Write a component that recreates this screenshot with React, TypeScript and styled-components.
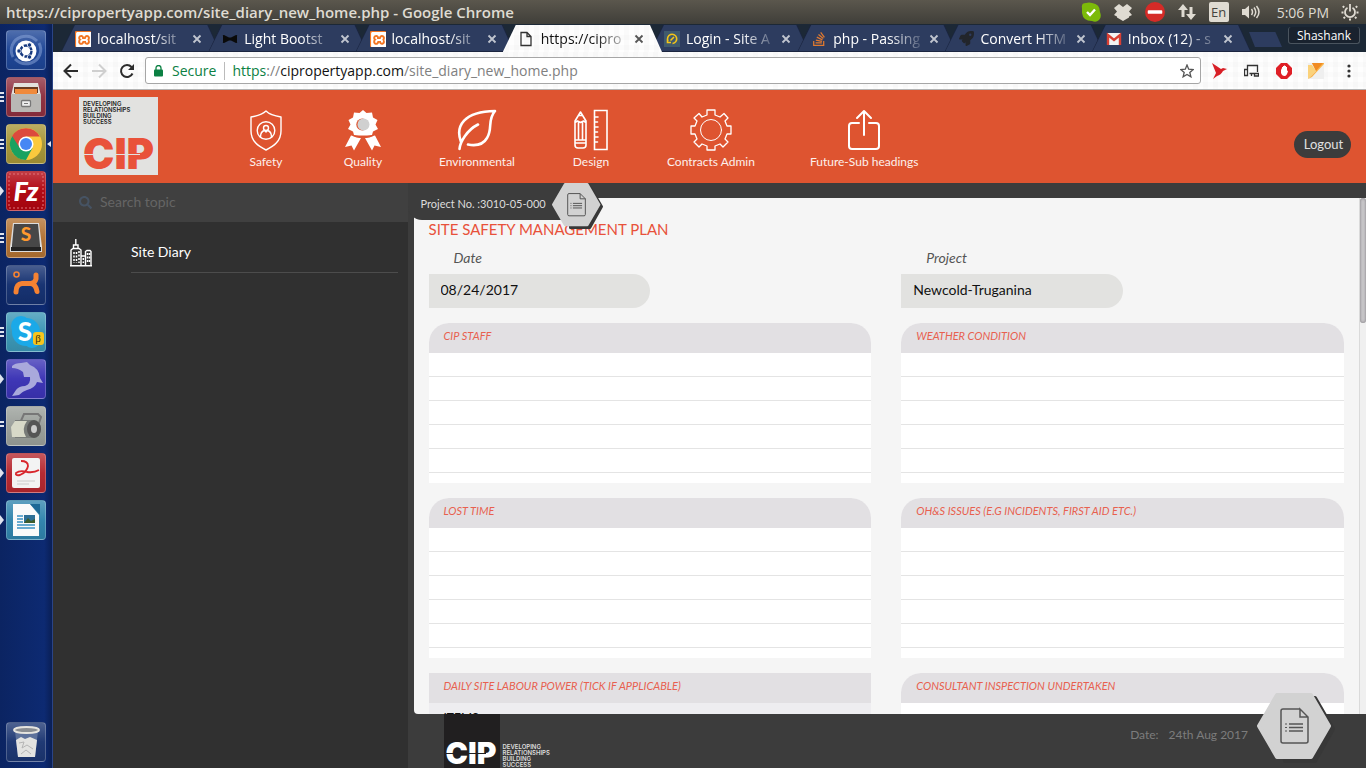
import React from "react";
import styled, { createGlobalStyle, css } from "styled-components";
import { FaRocket, FaStackOverflow, FaSearch } from "react-icons/fa";
import { SiXampp } from "react-icons/si";

const UI = `"Open Sans", "Noto Sans", sans-serif`;
const PAGE = `Lato, "Open Sans", sans-serif`;

const Global = createGlobalStyle`
  * { box-sizing: border-box; }
  body { margin: 0; font-family: ${PAGE}; overflow: hidden; }
  button, input, textarea { font: inherit; }
  a { color: inherit; text-decoration: none; }
  svg { display: block; flex: none; }
`;

/* ---------- desktop ---------- */
const Desktop = styled.div`
  display: flex;
  flex-direction: column;
  height: 100vh;
  background: #303030;
`;
const SystemBar = styled.header`
  display: flex;
  align-items: center;
  justify-content: space-between;
  height: 24px;
  flex: none;
  padding: 0 7px 0 6px;
  background: linear-gradient(#5b574d, #3f3e39);
  color: #dfdbd2;
  font-family: ${UI};
`;
const WindowTitle = styled.div`
  font-size: 15px;
  font-weight: 600;
`;
const Indicators = styled.div`
  display: flex;
  align-items: center;
  gap: 12px;
`;
const Keyboard = styled.span`
  width: 20px;
  height: 20px;
  border-radius: 2px;
  background: #dfdbd2;
  color: #45433d;
  font-size: 13px;
  line-height: 20px;
  text-align: center;
`;
const Clock = styled.span`
  font-size: 14px;
  padding-left: 4px;
`;
const Workspace = styled.div`
  display: flex;
  flex: 1;
  min-height: 0;
`;

/* ---------- launcher ---------- */
const Launcher = styled.nav`
  display: flex;
  flex-direction: column;
  gap: 7px;
  width: 53px;
  flex: none;
  padding: 6px 6px;
  background: linear-gradient(90deg, #0b2462, #0d2a72 85%, #0a1f55);
  border-right: 1px solid #2a4486;
`;
const Tile = styled.button<{ $bg: string; $last?: boolean }>`
  position: relative;
  width: 40px;
  height: 40px;
  flex: none;
  padding: 0;
  border: 1px solid rgba(255, 255, 255, 0.22);
  border-radius: 4px;
  background: linear-gradient(rgba(255, 255, 255, 0.22), rgba(255, 255, 255, 0.02) 50%, rgba(0, 0, 0, 0.08)), ${(p) => p.$bg};
  ${(p) => p.$last && css`margin-top: auto;`}
`;
const Pips = styled.span<{ $n: number }>`
  position: absolute;
  left: -7px;
  top: 14px;
  width: 4px;
  height: ${(p) => (p.$n === 2 ? 6 : 10)}px;
  ${(p) =>
    p.$n === 1
      ? css`background: #dfe3ee; clip-path: polygon(0 0, 100% 50%, 0 100%);`
      : css`background: repeating-linear-gradient(#dfe3ee 0 2px, transparent 2px 4px);`}
`;
const Focus = styled.span`
  position: absolute;
  right: -6px;
  top: 16px;
  width: 4px;
  height: 6px;
  background: #dfe3ee;
  clip-path: polygon(100% 0, 0 50%, 100% 100%);
`;

/* ---------- browser ---------- */
const Browser = styled.div`
  display: flex;
  flex-direction: column;
  flex: 1;
  min-width: 0;
`;
const TabStrip = styled.div`
  display: flex;
  height: 28px;
  flex: none;
  padding-left: 8px;
  background: #1c2836;
`;
const Tabs = styled.div`
  display: flex;
  flex: 1;
  min-width: 0;
`;
const slant = "polygon(0 100%, 13px 0, calc(100% - 12px) 0, 100% 100%)";
const weave = `repeating-linear-gradient(90deg, rgba(0,0,0,0.015) 0 5px, transparent 5px 10px),
  repeating-linear-gradient(rgba(0,0,0,0.012) 0 5px, transparent 5px 10px), #fefefe`;
const Tab = styled.div<{ $active?: boolean }>`
  position: relative;
  z-index: ${(p) => (p.$active ? 1 : 0)};
  display: flex;
  align-items: center;
  flex: 1;
  min-width: 0;
  height: 28px;
  margin-right: -12px;
  padding: 2px 18px 0 14px;
  isolation: isolate;
  color: ${(p) => (p.$active ? "#111" : "#fff")};
  &::before, &::after {
    content: "";
    position: absolute;
    z-index: -2;
    inset: 1px 0 0;
    clip-path: ${slant};
    background: ${(p) => (p.$active ? "#fefefe" : "#1b2540")};
  }
  &::after {
    z-index: -1;
    inset: 1px 1px ${(p) => (p.$active ? "0" : "1px")};
    background: ${(p) => (p.$active ? weave : "#2d3c5f")};
  }
`;
const TabTitle = styled.a`
  flex: 1;
  min-width: 0;
  margin: 0 2px 0 6px;
  overflow: hidden;
  white-space: nowrap;
  font-family: ${UI};
  font-size: 14px;
  line-height: 20px;
  mask-image: linear-gradient(90deg, #000 60%, transparent);
`;
const CloseButton = styled.button`
  width: 10px;
  height: 10px;
  padding: 0;
  border: 0;
  background: none;
  color: inherit;
  opacity: 0.7;
`;
const StripEnd = styled.div`
  display: flex;
  width: 127px;
  flex: none;
  padding: 3px 6px 0 10px;
  justify-content: space-between;
`;
const NewTab = styled.button`
  width: 33px;
  height: 15px;
  margin-top: 5px;
  padding: 0;
  border: 0;
  background: #2d3c5f;
  clip-path: polygon(0 0, 80% 0, 100% 100%, 18% 100%);
`;
const UserButton = styled.button`
  height: 17px;
  width: 72px;
  padding: 0;
  border: 1px solid #4a545e;
  border-top: 0;
  border-radius: 3px;
  background: #19222e;
  color: #fff;
  font-family: ${UI};
  font-size: 12px;
  line-height: 15px;
`;
const Toolbar = styled.div`
  display: flex;
  align-items: center;
  height: 38px;
  flex: none;
  padding: 0 15px 0 10px;
  background: ${weave};
  border-bottom: 1px solid #b3b3b3;
`;
const ToolButton = styled.button<{ $gap?: number }>`
  display: flex;
  padding: 0;
  margin-right: ${(p) => p.$gap ?? 0}px;
  border: 0;
  background: none;
  color: #2c2c2c;
`;
const Address = styled.div`
  display: flex;
  align-items: center;
  flex: 1;
  height: 27px;
  margin-right: 11px;
  padding: 0 6px 0 8px;
  border: 1px solid #a6a6a6;
  border-radius: 3px;
  background: #fff;
  color: #808080;
  font-family: ${UI};
  font-size: 14px;
  white-space: nowrap;
  b { font-weight: 400; color: #0b8043; }
  em { font-style: normal; color: #111; }
`;
const Secure = styled.span`
  margin: 0 7px 0 9px;
  padding-right: 8px;
  border-right: 1px solid #bbb;
  line-height: 18px;
  color: #0b8043;
`;
const Url = styled.span`
  flex: 1;
`;

/* ---------- site ---------- */
const SiteHeader = styled.header`
  display: flex;
  height: 93px;
  flex: none;
  padding: 7px 15px 0 26px;
  background: #de5430;
  color: #fff;
`;
const Logo = styled.a`
  display: flex;
  flex-direction: column;
  justify-content: space-between;
  width: 79px;
  height: 78px;
  padding: 4px 4px 0 4px;
  background: #e2e2e0;
`;
const Motto = styled.span<{ $light?: boolean }>`
  display: block;
  font-family: Inter, sans-serif;
  font-size: 6px;
  font-weight: 600;
  line-height: 6px;
  color: ${(p) => (p.$light ? "#ddd" : "#222")};
`;
const Wordmark = styled.span<{ $size: number; $color: string; $slit: string }>`
  display: block;
  position: relative;
  font-family: Inter, sans-serif;
  font-weight: 900;
  font-size: ${(p) => p.$size}px;
  line-height: 1;
  color: ${(p) => p.$color};
  &::after {
    content: "";
    position: absolute;
    left: 0;
    right: 20%;
    top: 50%;
    height: 1px;
    background: ${(p) => p.$slit};
  }
`;
const SiteNav = styled.nav`
  display: flex;
  gap: 55px;
  flex: 1;
  margin-left: 87px;
  padding-top: 12px;
`;
const NavLink = styled.a`
  display: flex;
  flex-direction: column;
  align-items: center;
  gap: 3px;
  color: #fdf0ec;
  font-size: 12px;
  line-height: 16px;
  white-space: nowrap;
`;
const Logout = styled.button`
  width: 57px;
  height: 27px;
  margin-top: 34px;
  padding: 0 0 2px 2px;
  border: 0;
  border-radius: 14px;
  background: #3c3c3c;
  color: #e0e0e0;
  font-size: 13px;
`;
const SiteBody = styled.div`
  display: flex;
  flex: 1;
  min-height: 0;
`;
const Sidebar = styled.aside`
  width: 27%;
  flex: none;
  background: #303030;
`;
const Search = styled.label`
  display: flex;
  align-items: center;
  gap: 8px;
  height: 39px;
  padding-left: 26px;
  background: #404040;
  color: #465363;
`;
const SearchInput = styled.input`
  flex: 1;
  min-width: 0;
  padding: 0 0 3px;
  border: 0;
  outline: 0;
  background: none;
  font-size: 14px;
  color: #ccc;
  &::placeholder { color: #656565; }
`;
const SideLink = styled.a`
  display: flex;
  align-items: center;
  gap: 39px;
  margin-top: 10px;
  padding: 0 10px 0 17px;
  color: #fff;
  font-size: 14px;
`;
const SideText = styled.span`
  flex: 1;
  height: 41px;
  line-height: 40px;
  border-bottom: 1px solid #4c4c4c;
`;
const Content = styled.main`
  position: relative;
  display: flex;
  flex-direction: column;
  flex: 1;
  min-width: 0;
  padding: 15px 0 0 6px;
  background: #3c3c3c;
`;
const ProjectTag = styled.div`
  position: absolute;
  z-index: 1;
  left: 0;
  top: 15px;
  width: 156px;
  height: 22px;
  padding-left: 13px;
  border-bottom-left-radius: 14px;
  background: #3c3c3c;
  color: #dcdcdc;
  font-size: 11px;
  line-height: 11px;
`;
const TopBadge = styled.button`
  position: absolute;
  z-index: 2;
  left: 144px;
  top: 0;
  padding: 0;
  border: 0;
  background: none;
`;
const Panel = styled.div`
  display: flex;
  flex: 1;
  min-height: 0;
  overflow: hidden;
  border-radius: 4px 0 0 4px;
  background: #f5f5f5;
`;
const Form = styled.form`
  flex: 1;
  min-width: 0;
  padding: 21px 15px 0;
`;
const Track = styled.div`
  width: 7px;
  flex: none;
  background: #f0f0f0;
  border-left: 1px solid #dadada;
`;
const Thumb = styled.div`
  width: 6px;
  height: 125px;
  border-radius: 4px;
  background: #c9c7ca;
  box-shadow: inset 0 0 3px #77757a;
`;
const Title = styled.h1`
  margin: 0;
  font-size: 15px;
  font-weight: 400;
  line-height: 20px;
  color: #e8513a;
`;
const Grid = styled.div`
  display: grid;
  grid-template-columns: 1fr 1fr;
  gap: 15px 30px;
`;
const Field = styled.label`
  display: block;
  padding-top: 9px;
  font-size: 14px;
  font-style: italic;
  line-height: 20px;
  color: #555;
`;
const FieldName = styled.span`
  display: block;
  padding: 0 0 6px 25px;
`;
const Input = styled.input`
  display: block;
  width: 50%;
  height: 34px;
  padding: 0 12px 3px;
  border: 0;
  border-radius: 0 17px 17px 0;
  background: #e2e2e0;
  color: #111;
  font-size: 14px;
  font-style: normal;
`;
const Card = styled.label<{ $square?: boolean }>`
  display: block;
  overflow: hidden;
  border-radius: ${(p) => (p.$square ? "0" : "20px 20px 0 0")};
  background: ${(p) => (p.$square ? "#eeedf0" : "#fff")};
`;
const CardName = styled.span`
  display: block;
  height: 30px;
  padding-left: 15px;
  background: #e2e0e3;
  color: #e8604f;
  font-size: 11px;
  font-style: italic;
  line-height: 26px;
`;
const Lines = styled.textarea`
  display: block;
  width: 100%;
  height: 130px;
  padding: 0 15px;
  border: 0;
  resize: none;
  outline: 0;
  line-height: 24px;
  background: repeating-linear-gradient(#fff 0 23px, #e4e4e4 23px 24px);
`;
const Items = styled.span`
  display: block;
  padding: 6px 15px;
  font-size: 12px;
  line-height: 16px;
  color: #111;
`;
const Footer = styled.footer`
  position: relative;
  display: flex;
  height: 54px;
  flex: none;
  padding: 0 118px 0 30px;
  color: #7c7c7c;
  font-size: 12px;
`;
const FooterMark = styled.div`
  display: flex;
  align-items: flex-end;
  width: 56px;
  padding-left: 2px;
  background: #211f20;
`;
const FooterMotto = styled.div`
  flex: 1;
  padding: 30px 0 0 3px;
`;
const FooterDate = styled.div`
  display: flex;
  gap: 10px;
  padding-top: 12px;
  line-height: 18px;
`;
const FooterBadge = styled.button`
  position: absolute;
  z-index: 2;
  right: 31px;
  top: -21px;
  padding: 0;
  border: 0;
  background: none;
`;

/* ---------- drawings ---------- */
const HexDoc = ({ w, h }: { w: number; h: number }) => (
  <svg width={w} height={h} viewBox="0 0 78 70" aria-hidden="true">
    <path d="M25 5H58L76 36L58 68H28Z" fill="#383838" stroke="#383838" strokeWidth="4" strokeLinejoin="round" />
    <path d="M20 2H54L72 33L54 64H20L2 33Z" fill="#d2d2d2" stroke="#d2d2d2" strokeWidth="4" strokeLinejoin="round" />
    <g fill="none" stroke="#555" strokeWidth="1.500">
      <path d="M43 16H26a2 2 0 0 0-2 2V48a2 2 0 0 0 2 2H49a2 2 0 0 0 2-2V24L43 16V24H51" />
      <path d="M32 31H46M32 34.500H46M32 38H46" />
      <path d="M28 31H30M28 34.500H30M28 38H30" strokeWidth="1" />
    </g>
  </svg>
);

const w = { fill: "none", stroke: "#fff", strokeLinejoin: "round", strokeLinecap: "round" } as const;
const NavIcons: Record<string, React.ReactNode> = {
  Safety: (
    <svg width="42" height="42" viewBox="0 0 42 42" {...w} strokeWidth="1.400">
      <path d="M21 2C17 6 12 7 6 8V22C6 32 13 37 21 41C29 37 36 32 36 22V8C30 7 25 6 21 2Z" />
      <circle cx="21" cy="21.500" r="8.800" />
      <circle cx="21" cy="19" r="2.500" />
      <path d="M15.500 28c0-4 2-6 4-6.500l1.500 1.500 1.500-1.500c2 .5 4 2.500 4 6.500" />
    </svg>
  ),
  Quality: (
    <svg width="42" height="42" viewBox="0 0 42 42">
      <g fill="#fff">
        <path d="M21 1L24.500 4L30 3.500L31 8.500L35.500 11L33.500 15.500L36 20L31 22.500L30 26L25 26.500H17L12 26L11 22.500L6 20L8.500 15.500L6.500 11L11 8.500L12 3.500L17.500 4Z" />
        <path d="M9 26.500L19 29L12 41.500L9.500 36.500L3 38ZM33 26.500L23 29L30 41.500L32.500 36.500L39 38Z" />
      </g>
      <path d="M11 26.500Q16 29 21 28Q26 29 31 26.500" stroke="#de5430" fill="none" strokeWidth="1.200" />
      <circle cx="20.300" cy="15.500" r="6" fill="#de5430" />
      <circle cx="21.500" cy="15.500" r="6" fill="#d0d0d0" />
    </svg>
  ),
  Environmental: (
    <svg width="42" height="42" viewBox="0 0 42 42" {...w} strokeWidth="2.600">
      <path d="M3.500 40C4 33 11 21 22 15.500M5 33C-1 17 8 2.500 39 2C31 11 37 20 31 29C27 36 20 37 12 35.500" />
    </svg>
  ),
  Design: (
    <svg width="42" height="42" viewBox="0 0 42 42" {...w} strokeWidth="1.600">
      <path d="M5 12L10.500 3L16 12V36a3 3 0 0 1-3 3H8a3 3 0 0 1-3-3ZM5 31H16M5 34H16M5 13.500l2.500-1.500 3 1.500 3-1.500 2.500 1.500M8.500 13V31M12.500 13V31M9 6.500H12" />
      <path d="M24.500 1.500H37V40.500H24.500ZM25 8H28M25 13H27.500M25 18H28M25 23H27.500M25 28H28M25 33H27.500" strokeLinejoin="miter" />
    </svg>
  ),
  "Contracts Admin": (
    <svg width="42" height="42" viewBox="0 0 42 42" {...w} strokeWidth="1.300">
      <path d="M17 1H25V6L30 8L34 4.500L38 9L35 12L37 17H41V25H37L35 30L38 33L33 38L30 35L25 37V41H17V37L12 35L9 38L4 33L7 30L5 25H1V17H5L7 12L4 9L9 4.500L12 8L17 6Z" />
      <circle cx="21" cy="21" r="10.500" strokeWidth="1" />
    </svg>
  ),
  "Future-Sub headings": (
    <svg width="42" height="42" viewBox="0 0 42 42" {...w} strokeWidth="2">
      <path d="M16 14H9a3 3 0 0 0-3 3V37a3 3 0 0 0 3 3H33a3 3 0 0 0 3-3V17a3 3 0 0 0-3-3H26M21 26V2M14 9L21 2L28 9" />
    </svg>
  ),
};

const Building = () => (
  <svg width="22" height="28" viewBox="0 0 22 28" fill="none" stroke="#fff" strokeWidth="1.400">
    <path d="M1 26.500V11L3 9.500H9L11 11V26.500M3.500 9V6H8V9M5.800 6V0M11 17H15.500V26.500M15.500 26V12.500L17 11.500H20L21 12.500V26.500M0 26.800H22" />
    <path d="M4 13V24M6.500 13V24M9 12V24M13.300 19V24M17.500 14V24M19.500 14V24" strokeWidth="1.500" strokeDasharray="2 1.500" />
  </svg>
);

const Cross = () => (
  <svg width="10" height="10" viewBox="0 0 10 10" stroke="currentColor" strokeWidth="1.800">
    <path d="M1.500 1.500L8.500 8.500M8.500 1.500L1.500 8.500" />
  </svg>
);

const favicon: Record<string, React.ReactNode> = {
  xampp: (
    <svg width="16" height="16" viewBox="0 0 16 16">
      <rect width="16" height="16" rx="1" fill="#f37623" />
      <SiXampp x="1" y="1" width="14" height="14" color="#fff" />
    </svg>
  ),
  bow: (
    <svg width="16" height="16" viewBox="0 0 16 16">
      <path d="M1 5Q0 4 2 4L7 6.500H9L14 4Q16 4 15 5V11Q16 12 14 12L9 9.500H7L2 12Q0 12 1 11Z" fill="#0a0a0a" />
    </svg>
  ),
  page: (
    <svg width="18" height="16" viewBox="0 0 18 16" fill="none" stroke="#333" strokeWidth="1.300">
      <path d="M4 1.500H10L14 5.500V14.500H4ZM10 1.500V5.500H14" />
    </svg>
  ),
  login: (
    <svg width="16" height="16" viewBox="0 0 16 16" fill="none">
      <rect width="16" height="16" fill="#405a6e" />
      <path d="M4 10A4.600 4.600 0 1 1 8.500 12.500M3.500 8V11.500H7M6.500 9.500L10 6" stroke="#f5c518" strokeWidth="1.600" />
    </svg>
  ),
  stack: <FaStackOverflow size={16} color="#e0792f" />,
  rocket: (
    <svg width="16" height="16" viewBox="0 0 16 16"><FaRocket size={15} color="#22252b" /></svg>
  ),
  mail: (
    <svg width="16" height="16" viewBox="0 0 16 16">
      <rect x="1" y="2" width="14" height="12" rx="1" fill="#f3f3f3" />
      <path d="M2 14V4L8 9L14 4V14" fill="none" stroke="#d93f33" strokeWidth="2.400" />
    </svg>
  ),
};

const tabs: [string, string][] = [
  ["xampp", "localhost/sit"],
  ["bow", "Light Bootst"],
  ["xampp", "localhost/sit"],
  ["page", "https://cipro"],
  ["login", "Login - Site A"],
  ["stack", "php - Passing"],
  ["rocket", "Convert HTM"],
  ["mail", "Inbox (12) - s"],
];

const glyph = { width: 38, height: 38, viewBox: "0 0 38 38" };
const G = `Lato, sans-serif`;
const apps: { name: string; bg: string; pips: number; focus?: boolean; art: React.ReactNode }[] = [
  { name: "Dash", bg: "#1d4596", pips: 0, art: (
    <svg {...glyph} fill="none">
      <path d="M6 26A14 14 0 0 1 14 6A16 16 0 0 1 30 10M32 12A14 14 0 0 1 24 32A16 16 0 0 1 8 28" stroke="#8fa9db" strokeWidth="3" opacity="0.5" />
      <circle cx="19" cy="20" r="10.500" fill="#fff" />
      <circle cx="19" cy="20" r="5.500" stroke="#16397f" strokeWidth="2.400" strokeDasharray="10 1.500" />
      <g fill="#16397f" stroke="#fff" strokeWidth="0.800"><circle cx="12" cy="20" r="2.200" /><circle cx="22.500" cy="14" r="2.200" /><circle cx="22.500" cy="26" r="2.200" /></g>
    </svg>) },
  { name: "Files", bg: "#8e2f3f", pips: 3, art: (
    <svg {...glyph}>
      <path d="M7 5H31L34 18V33H4V18Z" fill="#e3e1dd" />
      <path d="M7 9H31V15H7Z" fill="#6b3a1f" /><path d="M8 11H30V16H8Z" fill="#f08a3c" />
      <rect x="4" y="16" width="30" height="18" rx="1" fill="#b9b8b5" />
      <rect x="14.500" y="22.500" width="9" height="6" rx="1" fill="#eee" stroke="#777" strokeWidth="1.300" />
      <path d="M17 25.500H21" stroke="#777" />
    </svg>) },
  { name: "Chrome", bg: "#a79637", pips: 3, focus: true, art: (
    <svg {...glyph}>
      <circle cx="19" cy="19" r="16" fill="#fbc93d" />
      <path d="M5.100 11A16 16 0 0 0 19 35L25.500 23L19 19Z" fill="#1aa260" />
      <path d="M12.500 22.500L5.100 11A16 16 0 0 1 32.900 11.500H19Z" fill="#dc4a3d" />
      <circle cx="19" cy="19" r="7.500" fill="#fff" /><circle cx="19" cy="19" r="6" fill="#4687f4" />
    </svg>) },
  { name: "FileZilla", bg: "#b00510", pips: 1, art: (
    <svg {...glyph}>
      <rect x="2" y="2" width="34" height="34" fill="none" stroke="#e0757b" strokeDasharray="2 2" />
      <text x="19" y="29" textAnchor="middle" fill="#fff" fontFamily={G} fontSize="27" fontWeight="900" fontStyle="italic">Fz</text>
    </svg>) },
  { name: "Sublime Text", bg: "#b27233", pips: 3, art: (
    <svg {...glyph}>
      <path d="M6 4H32L35 28V33H3V28Z" fill="#ddd" /><path d="M7 5H31L33 26V28H5V26Z" fill="#474747" />
      <path d="M4 28H34V32H4Z" fill="#222" />
      <text x="19" y="22" textAnchor="middle" fill="#ff9a2e" fontFamily={G} fontSize="19" fontWeight="900">S</text>
    </svg>) },
  { name: "XAMPP", bg: "#143070", pips: 0, art: (
    <svg {...glyph} fill="none" stroke="#f58232" strokeWidth="5" strokeLinecap="round">
      <path d="M29 9V13Q28 17 24 17.500H15Q9 18 9 26M24 17.500Q29 18.500 30 25.500" />
      <circle cx="9.500" cy="8.500" r="0.800" />
    </svg>) },
  { name: "Skype", bg: "#3a96b5", pips: 3, art: (
    <svg {...glyph}>
      <circle cx="14" cy="13" r="10" fill="#1ba9e8" /><circle cx="19" cy="19" r="14" fill="#1ba9e8" /><circle cx="25" cy="26" r="9" fill="#1ba9e8" />
      <text x="18" y="28" textAnchor="middle" fill="#fff" fontFamily={G} fontSize="26" fontWeight="900">S</text>
      <rect x="26" y="19" width="11" height="13" rx="3" fill="#f7c51e" />
      <text x="31" y="29" textAnchor="middle" fill="#3f3208" fontFamily="Liberation Serif, serif" fontSize="11">β</text>
    </svg>) },
  { name: "MySQL Workbench", bg: "#3b33b5", pips: 1, art: (
    <svg {...glyph}>
      <path d="M5 6Q8 3 14 3L20 2L23 5Q32 8 33 18L36 23L30 22Q28 28 20 30Q16 31 12 35L5 36L9 30Q12 26 18 26Q24 24 23 17L17 17L16 12Q11 8 5 8Z" fill="#a9a9dc" />
    </svg>) },
  { name: "Text viewer", bg: "#9a9f9a", pips: 2, art: (
    <svg {...glyph} fill="none">
      <path d="M13 16L17 7H31L34 10L30 22" stroke="#777" strokeWidth="2" />
      <path d="M8 13H26Q34 14 34 22Q33 31 26 31H8Z" fill="#777b78" /><ellipse cx="27" cy="22" rx="7" ry="9" fill="#555" />
      <ellipse cx="27" cy="22" rx="3" ry="4" fill="#ccc" /><path d="M4 20L8 14H20Q14 22 19 30H5Z" fill="#d7d9c8" />
    </svg>) },
  { name: "Document Viewer", bg: "#b5272f", pips: 1, art: (
    <svg {...glyph} fill="none">
      <rect x="5" y="4" width="28" height="30" rx="2" fill="#f3f3f3" />
      <path d="M14 7Q21 7 21 12Q20 18 13 21Q8 22 9 19Q13 16 20 18Q27 19 32 16" stroke="#d8262c" strokeWidth="1.800" />
      <path d="M10 27H28M10 30H22" stroke="#ccc" />
    </svg>) },
  { name: "Writer", bg: "#3084ad", pips: 1, art: (
    <svg {...glyph}>
      <path d="M6 3H23L32 14V35H6Z" fill="#fafafa" /><path d="M23 3H33V14Z" fill="#1d6996" />
      <path d="M10 15H16M10 18H16M10 21H16M10 24H28M10 27H28" stroke="#3b93c4" strokeWidth="1.500" />
      <rect x="17" y="14" width="11" height="8" fill="#2d6f96" /><path d="M17 22L21 17L24 20L28 18V22Z" fill="#3c5c2e" />
    </svg>) },
];

const Launch = () => (
  <Launcher aria-label="Launcher">
    {apps.map((a) => (
      <Tile key={a.name} $bg={a.bg} aria-label={a.name}>
        {a.pips > 0 && <Pips $n={a.pips} />}
        {a.focus && <Focus />}
        {a.art}
      </Tile>
    ))}
    <Tile $bg="#1c3672" $last aria-label="Trash">
      <svg {...glyph}>
        <path d="M8 8H31L28 34H11Z" fill="#5d719b" />
        <path d="M9 17L14 14L18 16L23 14L30 17L28 34H11Z" fill="#e3e3e1" />
        <path d="M12 20L17 19L15 25L20 22L26 26M14 31L19 27L24 31" stroke="#b5b5b5" fill="none" />
        <ellipse cx="19.500" cy="7" rx="12.500" ry="3" fill="#8a8d92" stroke="#e6e4df" strokeWidth="2" />
      </svg>
    </Tile>
  </Launcher>
);

const System = () => (
  <SystemBar>
    <WindowTitle>https://cipropertyapp.com/site_diary_new_home.php - Google Chrome</WindowTitle>
    <Indicators>
      <svg width="20" height="20" viewBox="0 0 20 20">
        <path d="M1 6Q0 1 5 1Q8 0 11 1Q19 2 19 10Q21 15 18 18Q15 21 11 19Q2 19 1 11Z" fill="#7cba0a" />
        <path d="M6 10L9 13L14 7.500" stroke="#fff" strokeWidth="2.400" fill="none" />
      </svg>
      <svg width="20" height="20" viewBox="0 0 20 20" fill="#dfdbd2">
        <path d="M6 2L10 5L14 2L19 6L16 9.500L19 13L16 14.500V15.500L10 19L4 15.500V14.500L1 13L4 9.500L1 6Z" />
      </svg>
      <svg width="20" height="20" viewBox="0 0 22 22">
        <circle cx="11" cy="11" r="11" fill="#d52b27" /><rect x="3" y="9" width="16" height="4" rx="1" fill="#fff" />
      </svg>
      <svg width="20" height="20" viewBox="0 0 20 20" fill="#dfdbd2">
        <path d="M6 2L11 8H7.500V15H4.500V8H1ZM14 18L9 12H12.500V5H15.500V12H19Z" />
      </svg>
      <Keyboard>En</Keyboard>
      <svg width="20" height="20" viewBox="0 0 20 20" fill="none" stroke="#dfdbd2" strokeWidth="1.500">
        <path d="M1 7H4L8 3.500V16.500L4 13H1Z" fill="#dfdbd2" stroke="none" />
        <path d="M10.500 7Q12.500 10 10.500 13M13 5.500Q16.500 10 13 14.500M15.500 4Q20.500 10 15.500 16" />
      </svg>
      <Clock>5:06 PM</Clock>
      <svg width="18" height="18" viewBox="0 0 18 18" fill="none" stroke="#dfdbd2">
        <path d="M6.500 4.800A5 5 0 1 0 11.500 4.800M9 1V8.500" strokeWidth="1.800" />
        <path d="M3.200 4.500L1.800 3.100M14.800 4.500L16.200 3.100M2.500 9.500H0.500M15.500 9.500H17.500M4 14L2.600 15.400M14 14L15.400 15.400M9 15.500V17.500" strokeWidth="2" />
      </svg>
    </Indicators>
  </SystemBar>
);

const Chrome = () => (
  <>
    <TabStrip>
      <Tabs>
        {tabs.map(([icon, title], i) => (
          <Tab key={i} $active={icon === "page"}>
            {favicon[icon]}
            <TabTitle href="#">{title}</TabTitle>
            <CloseButton aria-label="Close tab"><Cross /></CloseButton>
          </Tab>
        ))}
      </Tabs>
      <StripEnd>
        <NewTab aria-label="New tab" />
        <UserButton>Shashank</UserButton>
      </StripEnd>
    </TabStrip>
    <Toolbar>
      <ToolButton $gap={12} aria-label="Back">
        <svg width="16" height="16" viewBox="0 0 16 16" fill="none" stroke="#2c2c2c" strokeWidth="2"><path d="M15 8H2M8 1.500L1.500 8L8 14.500" /></svg>
      </ToolButton>
      <ToolButton $gap={12} aria-label="Forward">
        <svg width="16" height="16" viewBox="0 0 16 16" fill="none" stroke="#cfcfcf" strokeWidth="2"><path d="M1 8H14M8 1.500L14.500 8L8 14.500" /></svg>
      </ToolButton>
      <ToolButton $gap={10} aria-label="Reload">
        <svg width="16" height="16" viewBox="0 0 16 16" fill="none" stroke="#2c2c2c" strokeWidth="2"><path d="M13.500 10.500A6 6 0 1 1 12.500 4L14 5.500" /><path d="M15 1V7H9Z" fill="#2c2c2c" stroke="none" /></svg>
      </ToolButton>
      <Address>
        <svg width="9" height="12" viewBox="0 0 9 12"><rect y="4.500" width="9" height="7" rx="1" fill="#0b8043" /><path d="M2 5V3a2.500 2.500 0 0 1 5 0V5" fill="none" stroke="#0b8043" strokeWidth="1.300" /></svg>
        <Secure>Secure</Secure>
        <Url><b>https</b>://<em>cipropertyapp.com</em>/site_diary_new_home.php</Url>
        <svg width="14" height="14" viewBox="0 0 14 14" fill="none" stroke="#555" strokeWidth="1.300"><path d="M7 1L8.700 5.200L13.200 5.500L9.800 8.400L10.900 12.800L7 10.400L3.100 12.800L4.200 8.400L0.800 5.500L5.300 5.200Z" /></svg>
      </Address>
      <ToolButton $gap={17} aria-label="Hummingbird">
        <svg width="15" height="16" viewBox="0 0 15 16" fill="#d81f26"><path d="M0 0L9 6L11 5L15 6L11 8Q9 12 5 13L1 16L4 10Z" /></svg>
      </ToolButton>
      <ToolButton $gap={17} aria-label="Devices">
        <svg width="15" height="14" viewBox="0 0 15 14" fill="none" stroke="#333"><path d="M3.500 5V1.500H13.500V8M5.500 9.500H10.500M0.500 5.500H3.500V11.500H0.500ZM10.500 9.500H14.500V12H10.500ZM7.500 9.500V12" strokeWidth="1.300" /></svg>
      </ToolButton>
      <ToolButton $gap={16} aria-label="Ad blocker">
        <svg width="16" height="16" viewBox="0 0 16 16"><path d="M5 0H11L16 5V11L11 16H5L0 11V5Z" fill="#df1f26" /><path d="M5 5V10Q6 13 8.500 13Q11 13 12 8L11 7.500V4H10V3H9V2.500H8V3H7V4H6V7L5 5Z" fill="#fff" /></svg>
      </ToolButton>
      <ToolButton $gap={23} aria-label="Mail tools">
        <svg width="16" height="16" viewBox="0 0 16 16"><path d="M0 0H16V16H0Z" fill="#efefef" /><path d="M0 2L4 2L8 8L0 16Z" fill="#fbd27a" /><path d="M4 0H16V1L4 14L0 16L8 8Z" fill="#f9b64c" /><path d="M4 0H15L8 8Z" fill="#f18b22" /></svg>
      </ToolButton>
      <ToolButton aria-label="Menu">
        <svg width="4" height="14" viewBox="0 0 4 14" fill="#333"><circle cx="2" cy="2" r="1.600" /><circle cx="2" cy="7" r="1.600" /><circle cx="2" cy="12" r="1.600" /></svg>
      </ToolButton>
    </Toolbar>
  </>
);

const MottoLines = ({ light }: { light?: boolean }) => (
  <Motto $light={light}>DEVELOPING<br />RELATIONSHIPS<br />BUILDING<br />SUCCESS</Motto>
);

const LinedCard = ({ name }: { name: string }) => (
  <Card><CardName>{name}</CardName><Lines /></Card>
);

export default function App() {
  return (
    <Desktop>
      <Global />
      <System />
      <Workspace>
        <Launch />
        <Browser>
          <Chrome />
          <SiteHeader>
            <Logo href="#">
              <MottoLines />
              <Wordmark $size={42} $color="#e9523a" $slit="#e2e2e0">CIP</Wordmark>
            </Logo>
            <SiteNav>
              {Object.entries(NavIcons).map(([name, icon]) => (
                <NavLink key={name} href="#">{icon}{name}</NavLink>
              ))}
            </SiteNav>
            <Logout>Logout</Logout>
          </SiteHeader>
          <SiteBody>
            <Sidebar>
              <Search>
                <FaSearch size={13} />
                <SearchInput placeholder="Search topic" aria-label="Search topic" />
              </Search>
              <SideLink href="#"><Building /><SideText>Site Diary</SideText></SideLink>
            </Sidebar>
            <Content>
              <ProjectTag>Project No. :3010-05-000</ProjectTag>
              <TopBadge aria-label="Project documents"><HexDoc w={51} h={46} /></TopBadge>
              <Panel>
                <Form>
                  <Title>SITE SAFETY MANAGEMENT PLAN</Title>
                  <Grid>
                    <Field><FieldName>Date</FieldName><Input defaultValue="08/24/2017" /></Field>
                    <Field><FieldName>Project</FieldName><Input defaultValue="Newcold-Truganina" /></Field>
                    <LinedCard name="CIP STAFF" />
                    <LinedCard name="WEATHER CONDITION" />
                    <LinedCard name="LOST TIME" />
                    <LinedCard name="OH&S ISSUES (E.G INCIDENTS, FIRST AID ETC.)" />
                    <Card as="section" $square><CardName>DAILY SITE LABOUR POWER (TICK IF APPLICABLE)</CardName><Items>ITEMS</Items></Card>
                    <LinedCard name="CONSULTANT INSPECTION UNDERTAKEN" />
                  </Grid>
                </Form>
                <Track><Thumb /></Track>
              </Panel>
              <Footer>
                <FooterMark><Wordmark $size={30} $color="#fff" $slit="#211f20">CIP</Wordmark></FooterMark>
                <FooterMotto><MottoLines light /></FooterMotto>
                <FooterDate><span>Date:</span><span>24th Aug 2017</span></FooterDate>
                <FooterBadge aria-label="Documents"><HexDoc w={78} h={70} /></FooterBadge>
              </Footer>
            </Content>
          </SiteBody>
        </Browser>
      </Workspace>
    </Desktop>
  );
}
